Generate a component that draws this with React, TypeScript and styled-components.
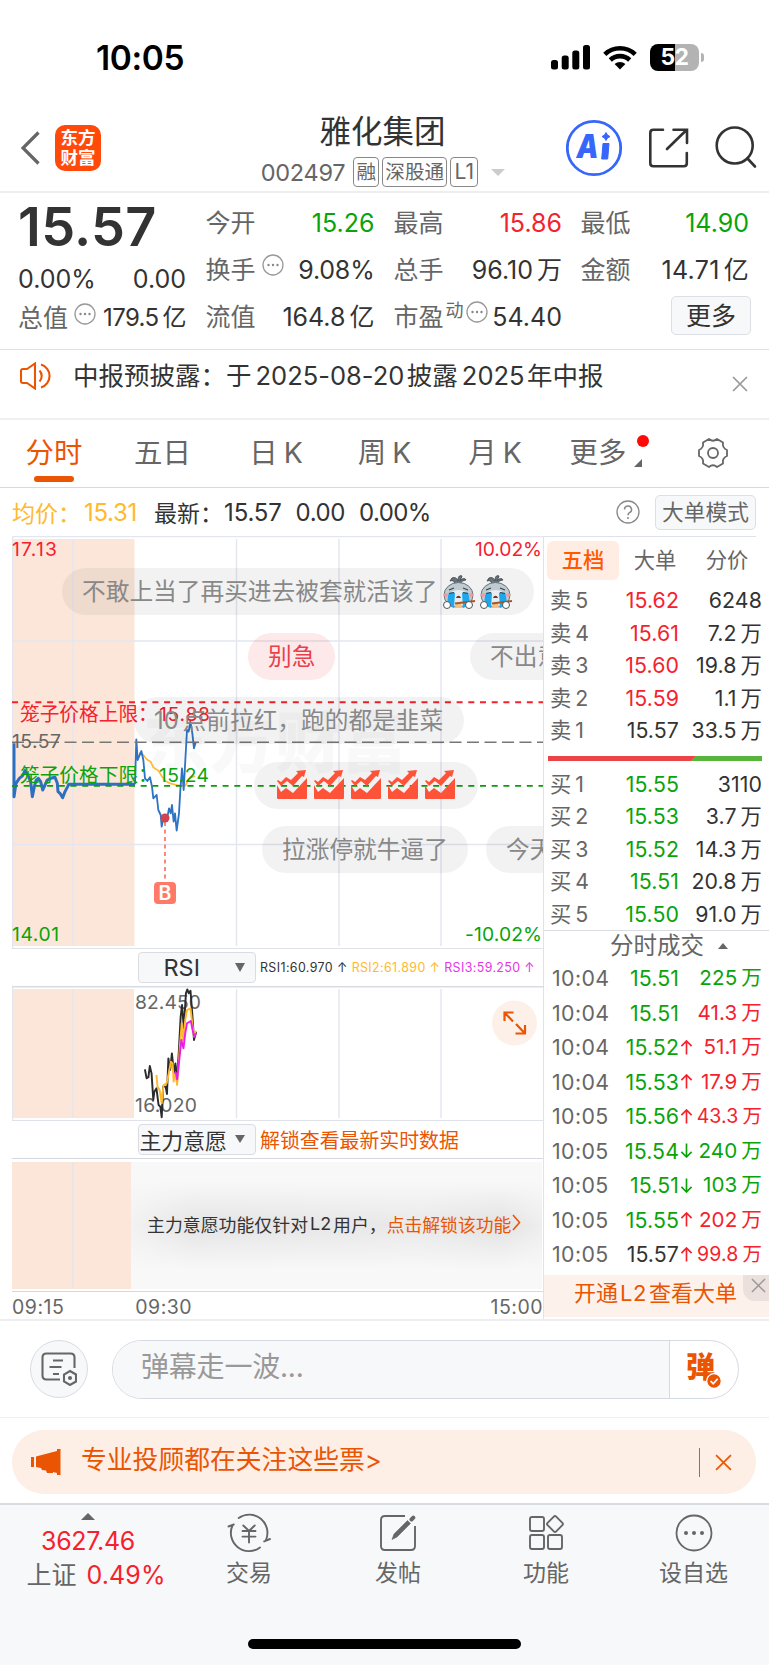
import React from "react";
import styled, { createGlobalStyle } from "styled-components";

const C = {
  text: "#333",
  sub: "#666",
  red: "#f5222d",
  green: "#0aa30a",
  orange: "#ea5504",
  yellow: "#ffb92e",
  line: "#dfe2e8",
  pink: "#fce6da",
  soft: "#f7f8fa",
};

const Global = createGlobalStyle`
  * { box-sizing: border-box; }
  body {
    margin: 0;
    background: #fff;
    color: ${C.text};
    font-family: Inter, "Noto Sans CJK SC", sans-serif;
    font-feature-settings: "calt" 0;
  }
  svg { display: block; flex: none; }
`;

const Page = styled.main`
  width: 769px;
  height: 1665px;
  overflow: hidden;
  display: flex;
  flex-direction: column;
  white-space: nowrap;
`;

type TxtProps = { $size?: number; $color?: string; $ls?: number; $weight?: number; $ml?: number };
const Txt = styled.span<TxtProps>`
  font-size: ${(p) => p.$size ?? 25}px;
  color: ${(p) => p.$color ?? C.text};
  letter-spacing: ${(p) => p.$ls ?? 0}px;
  font-weight: ${(p) => p.$weight ?? 400};
  margin-left: ${(p) => p.$ml ?? 0}px;
`;

/* ---------- status bar ---------- */
const StatusBar = styled.div`
  height: 112px;
  flex: none;
  display: flex;
  align-items: flex-start;
  padding: 38px 65px 0 96px;
`;
const Clock = styled.div`
  flex: 1;
  font-size: 33.5px;
  line-height: 40px;
  font-weight: 600;
  color: #000;
  letter-spacing: -0.4px;
`;
const Battery = styled.div`
  width: 49px;
  height: 27px;
  margin: 6px 0 0 13px;
  border-radius: 8px;
  background: linear-gradient(90deg, #000 52%, #b3b3b3 52%);
  color: #fff;
  font-size: 23px;
  line-height: 27px;
  font-weight: 700;
  letter-spacing: -0.5px;
  text-align: center;
`;
const BatteryNub = styled.div`
  width: 3px;
  height: 9px;
  margin: 15px 0 0 2px;
  border-radius: 0 4px 4px 0;
  background: #b3b3b3;
`;

/* ---------- header ---------- */
const Header = styled.header`
  height: 81px;
  flex: none;
  display: flex;
  border-bottom: 2px solid #eee;
`;
const HeaderSide = styled.div<{ $w: number }>`
  width: ${(p) => p.$w}px;
  height: 72px;
  display: flex;
  align-items: center;
`;
const Brand = styled.div`
  width: 46px;
  height: 46px;
  margin-left: 15px;
  border-radius: 10px;
  background: #ff4a0a;
  color: #fff;
  font-size: 17.5px;
  line-height: 19.5px;
  font-weight: 700;
  text-align: center;
  padding: 3px 5px 0;
  white-space: normal;
`;
const Heading = styled.div`
  flex: 1;
  display: flex;
  flex-direction: column;
  align-items: center;
  padding-right: 4px;
`;
const Title = styled.h1`
  margin: 0;
  font-size: 31.5px;
  line-height: 40px;
  font-weight: 400;
`;
const CodeRow = styled.div`
  display: flex;
  align-items: center;
  height: 30px;
  margin-top: 5px;
  padding-left: 1px;
  color: ${C.sub};
`;
const Badge = styled.span<{ $w: number }>`
  width: ${(p) => p.$w}px;
  height: 30px;
  margin-right: 3px;
  border: 1.5px solid #888;
  border-radius: 4px;
  font-size: 19.6px;
  line-height: 28px;
  text-align: center;
`;
const Caret = styled.i<{ $s: number; $h: number; $c: string; $up?: boolean }>`
  width: 0;
  height: 0;
  flex: none;
  border: ${(p) => p.$s}px solid transparent;
  border-top: ${(p) => (p.$up ? "0" : `${p.$h}px solid ${p.$c}`)};
  border-bottom: ${(p) => (p.$up ? `${p.$h}px solid ${p.$c}` : "0")};
`;

/* ---------- quote ---------- */
const Quote = styled.section`
  height: 157px;
  flex: none;
  display: flex;
  padding: 0 19px 0 18px;
  border-bottom: 1px solid #e2e2e2;
`;
const QuoteCol = styled.div<{ $w: number; $ml?: number; $top?: number }>`
  width: ${(p) => p.$w}px;
  margin-left: ${(p) => p.$ml ?? 0}px;
  padding-top: ${(p) => p.$top ?? 6}px;
  flex: none;
`;
const BigPrice = styled.div`
  font-size: 54px;
  line-height: 60px;
  font-weight: 600;
  letter-spacing: 0.3px;
`;
const Pair = styled.div<{ $h?: number }>`
  display: flex;
  align-items: center;
  justify-content: space-between;
  height: ${(p) => p.$h ?? 47}px;
  font-size: 25px;
  line-height: 32px;
`;
const Label = styled.span`
  color: ${C.sub};
  display: flex;
  align-items: center;
`;
const Unit = styled.span`
  margin-left: 4px;
`;
const Sup = styled.span`
  font-size: 18px;
  margin: -12px 0 0 2px;
`;
const MoreButton = styled.button`
  display: block;
  width: 80px;
  height: 39px;
  margin: 8px -2px 0 auto;
  padding: 0;
  border: 1.5px solid #dcdfe5;
  border-radius: 5px;
  background: ${C.soft};
  color: ${C.text};
  font: inherit;
  font-size: 25px;
  line-height: 34px;
`;

/* ---------- notice ---------- */
const Notice = styled.section`
  height: 70px;
  flex: none;
  display: flex;
  align-items: flex-start;
  padding: 9px 21px 0 20px;
  border-bottom: 2px solid #f0f0f0;
`;
const NoticeText = styled.div`
  flex: 1;
  margin: 0 0 0 20px;
  font-size: 25.5px;
  line-height: 34px;
  b { font-weight: 400; margin: 0 2.5px 0 4px; letter-spacing: 0; }
`;

/* ---------- tabs ---------- */
const Tabs = styled.nav`
  height: 68px;
  flex: none;
  display: flex;
  border-bottom: 1px solid #d5d9e4;
  position: relative;
`;
const Tab = styled.div<{ $w: number; $on?: boolean }>`
  width: ${(p) => p.$w}px;
  display: flex;
  flex-direction: column;
  align-items: center;
  padding-top: 15px;
  font-size: 28.4px;
  line-height: 36px;
  word-spacing: -2px;
  color: ${(p) => (p.$on ? C.orange : C.sub)};
  &::after {
    content: "";
    width: 40px;
    height: 6px;
    margin-top: 5px;
    border-radius: 3px;
    background: ${(p) => (p.$on ? C.orange : "transparent")};
  }
`;
const TabDot = styled.i`
  position: absolute;
  left: 637px;
  top: 15px;
  width: 12px;
  height: 12px;
  border-radius: 6px;
  background: #ff0808;
`;
const TabCorner = styled.i`
  position: absolute;
  left: 634px;
  top: 39px;
  border-left: 8px solid transparent;
  border-bottom: 8px solid ${C.sub};
`;

const InfoRow = styled.div`
  height: 48px;
  flex: none;
  display: flex;
  align-items: center;
  padding: 0 13px 0 12px;
  font-size: 24px;
`;
const Spacer = styled.div`
  flex: 1;
`;
const ModeButton = styled.button`
  width: 101px;
  height: 35px;
  margin-left: 15px;
  padding: 0;
  border: 1.5px solid #dcdfe5;
  border-radius: 5px;
  background: ${C.soft};
  color: ${C.sub};
  font: inherit;
  font-size: 21.7px;
  line-height: 30px;
`;

/* ---------- main area ---------- */
const Main = styled.section`
  height: 785px;
  flex: none;
  display: flex;
  border-bottom: 2px solid #eee;
`;
const ChartCol = styled.div`
  width: 544px;
  padding-left: 12px;
  border-right: 1px solid ${C.line};
`;
const PriceArea = styled.div`
  position: relative;
  height: 412px;
  overflow: hidden;
`;
const Danmu = styled.div<{ $x: number; $y: number; $w: number; $red?: boolean }>`
  position: absolute;
  left: ${(p) => p.$x}px;
  top: ${(p) => p.$y}px;
  width: ${(p) => p.$w}px;
  height: 47px;
  padding-left: 20px;
  border-radius: 24px;
  display: flex;
  align-items: center;
  background: ${(p) => (p.$red ? "rgba(235,40,50,.1)" : "rgba(0,0,0,.05)")};
  color: ${(p) => (p.$red ? "#e8404a" : "#888")};
  font-size: 23.7px;
  line-height: 44px;
`;
const IndicatorBar = styled.div`
  height: 38px;
  display: flex;
  align-items: center;
  padding: 0 0 1px 126px;
  border-top: 1px solid ${C.line};
  font-size: 13.2px;
`;
const Select = styled.div`
  width: 118px;
  height: 31px;
  flex: none;
  display: flex;
  align-items: center;
  justify-content: flex-end;
  padding-right: 10px;
  border: 1.5px solid #d9dce3;
  border-radius: 4px;
  background: ${C.soft};
  font-size: 21.7px;
`;
const Locked = styled.div`
  height: 134px;
  display: flex;
  padding: 3px 0 2px;
  border-top: 1.5px solid #d5d8de;
  border-bottom: 1.5px solid #d5d8de;
`;
const LockedPink = styled.div`
  width: 119px;
  background: linear-gradient(90deg, ${C.pink} 60px, #ebe6e6 60px, #ebe6e6 62px, ${C.pink} 62px);
`;
const LockedMsg = styled.div`
  width: 411px;
  display: flex;
  align-items: center;
  padding: 0 0 4px 16px;
  font-size: 17.9px;
  background:
    linear-gradient(180deg, #f8f8f8 15%, rgba(248,248,248,0) 50%, #f8f8f8 85%),
    linear-gradient(90deg, #f2f2f2 0%, #e4e4e4 15%, #e9e9e9 70%, #e2e2e2 90%, #eee 100%);
`;
const TimeAxis = styled.div`
  display: flex;
  height: 29px;
  align-items: center;
  color: ${C.sub};
  font-size: 19.5px;
  letter-spacing: 0.5px;
`;

/* ---------- order book ---------- */
const BookCol = styled.aside`
  width: 225px;
  display: flex;
  flex-direction: column;
`;
const BookTabs = styled.div`
  height: 48px;
  flex: none;
  width: 212px;
  display: flex;
  align-items: center;
  border-top: 1px solid ${C.line};
  padding-left: 3px;
  font-size: 21.3px;
  line-height: 30px;
  color: ${C.sub};
`;
const BookTab = styled.div<{ $on?: boolean }>`
  width: 72px;
  height: 39px;
  line-height: 38px;
  text-align: center;
  border-radius: 6px;
  flex: none;
  color: ${(p) => (p.$on ? "#ff5a00" : C.sub)};
  font-weight: ${(p) => (p.$on ? 500 : 400)};
  background: ${(p) => (p.$on ? "#ffede4" : "none")};
`;
const Row = styled.div<{ $h: number }>`
  height: ${(p) => p.$h}px;
  flex: none;
  display: grid;
  grid-template-columns: 62px 73px 83px;
  align-items: center;
  font-size: 21.3px;
  line-height: 30px;
  letter-spacing: 0.1px;
  color: ${C.sub};
`;
const RowLabel = styled.span<{ $l: number }>`
  padding-left: ${(p) => p.$l}px;
  letter-spacing: ${(p) => (p.$l === 8 ? 0.4 : 0)}px;
`;
const RowPrice = styled.span<{ $c: string }>`
  text-align: right;
  color: ${(p) => p.$c};
`;
const RowVol = styled.span<{ $c: string; $s?: number }>`
  display: flex;
  justify-content: flex-end;
  align-items: center;
  color: ${(p) => p.$c};
  font-size: ${(p) => p.$s ?? 21.3}px;
  svg { margin-right: auto; margin-left: 1px; }
`;
const Ratio = styled.div`
  width: 214px;
  height: 5px;
  flex: none;
  margin: 9px 0 7px 4px;
  background: linear-gradient(135deg, #ea4446 104px, #58b53c 104.5px);
`;
const TradesHead = styled.div`
  height: 31px;
  flex: none;
  display: flex;
  align-items: center;
  justify-content: center;
  gap: 14px;
  border-top: 1.5px solid #d8dbe2;
  color: ${C.sub};
  font-size: 23.5px;
  line-height: 30px;
  padding-left: 25px;
`;
const Upsell = styled.div`
  position: relative;
  height: 42px;
  flex: none;
  margin-top: 3px;
  padding-right: 2px;
  background: #fdf1eb;
  color: ${C.orange};
  font-size: 22px;
  line-height: 36px;
  text-align: center;
  b { font-weight: 400; margin: 0 2px; letter-spacing: 0.5px; }
`;
const UpsellClose = styled.div`
  position: absolute;
  right: 0;
  top: 0;
  width: 26px;
  height: 26px;
  border-bottom-left-radius: 12px;
  background: #ebe0db;
  display: flex;
  align-items: center;
  justify-content: center;
  padding-left: 4px;
  padding-bottom: 4px;
`;

/* ---------- footer parts ---------- */
const ChatBar = styled.section`
  height: 97px;
  flex: none;
  display: flex;
  align-items: center;
  padding: 0 30px 0 30px;
  border-bottom: 1px solid #eee;
`;
const RoundButton = styled.div`
  width: 58px;
  height: 58px;
  border-radius: 29px;
  border: 1.5px solid #d9dce3;
  background: ${C.soft};
  display: flex;
  align-items: center;
  justify-content: center;
`;
const ChatInput = styled.div`
  width: 627px;
  height: 59px;
  margin-left: 24px;
  border-radius: 30px;
  border: 1.5px solid #d5d9e0;
  display: flex;
  overflow: hidden;
`;
const Placeholder = styled.div`
  width: 557px;
  padding-left: 28px;
  background: ${C.soft};
  border-right: 1.5px solid #d5d9e0;
  color: #999;
  font-size: 28px;
  line-height: 52px;
  letter-spacing: -0.2px;
`;
const Bullet = styled.div`
  position: relative;
  flex: 1;
  padding-left: 16px;
  font-size: 29px;
  font-weight: 900;
  line-height: 53px;
  color: ${C.orange};
  svg { position: absolute; left: 36px; top: 32px; }
`;
const Promo = styled.section`
  height: 64px;
  flex: none;
  margin: 12px 13px 9px 12px;
  padding: 0 24px 0 19px;
  border-radius: 32px;
  background: #fdeee6;
  display: flex;
  align-items: center;
  color: ${C.orange};
`;
const PromoText = styled.div`
  margin: -5px 0 0 20px;
  font-size: 25.8px;
  line-height: 34px;
`;
const Rule = styled.i`
  width: 1.5px;
  height: 29px;
  margin-right: 15px;
  background: ${C.orange};
`;
const BottomBar = styled.footer`
  flex: 1;
  display: flex;
  flex-direction: column;
  align-items: center;
  background: ${C.soft};
  border-top: 2px solid #d8dbe0;
`;
const BottomItems = styled.div`
  width: 769px;
  height: 134px;
  display: flex;
`;
const IndexBox = styled.div`
  width: 176px;
  display: flex;
  flex-direction: column;
  align-items: center;
  padding-top: 8px;
  color: ${C.red};
  font-size: 25px;
  line-height: 34px;
`;
const IndexLine = styled.div<{ $pl?: number; $ls?: number }>`
  padding-left: ${(p) => p.$pl ?? 0}px;
  letter-spacing: ${(p) => p.$ls ?? 0}px;
`;
const BottomItem = styled.div<{ $w: number }>`
  width: ${(p) => p.$w}px;
  display: flex;
  flex-direction: column;
  align-items: center;
  padding-top: 8px;
  color: ${C.sub};
  font-size: 23px;
  line-height: 30px;
  svg { margin-bottom: 5px; }
`;
const HomeBar = styled.div`
  width: 273px;
  height: 10px;
  border-radius: 5px;
  background: #000;
`;

/* ---------- icons ---------- */
const Dots = ({ ml = 4 }: { ml?: number }) => (
  <svg width="22" height="22" viewBox="0 0 22 22" style={{ marginLeft: ml, marginTop: -9 }}>
    <circle cx="11" cy="11" r="10" fill="none" stroke="#999" strokeWidth="1.3" />
    <g fill="#888">
      <circle cx="6.5" cy="11" r="1.2" />
      <circle cx="11" cy="11" r="1.2" />
      <circle cx="15.5" cy="11" r="1.2" />
    </g>
  </svg>
);

const Cross = ({ s, c, w = 1.6 }: { s: number; c: string; w?: number }) => (
  <svg width={s} height={s} viewBox="0 0 16 16">
    <path d="M1 1 15 15M15 1 1 15" stroke={c} strokeWidth={w} fill="none" />
  </svg>
);

const Arrow = ({ up, c, s = 13 }: { up: boolean; c: string; s?: number }) => (
  <svg width={s} height={s * 1.15} viewBox="0 0 14 16" fill="none" stroke={c} strokeWidth="1.8">
    <path d={up ? "M7 15.5V1M1.5 6.5 7 1l5.5 5.5" : "M7 .5V15M1.5 9.5 7 15l5.5-5.5"} />
  </svg>
);

const CryFace = ({ ml }: { ml: number }) => (
  <svg width="34" height="36" viewBox="0 0 34 36" style={{ marginLeft: ml }}>
    <path d="M10 4c3-1 5 0 6 3 0-4 1-6 4-5-1 2-1 3-2 5 2-3 5-3 6-1-3 0-5 2-6 4h-5c-1-3-2-4-5-3z" fill="#66737a" stroke="#465056" strokeWidth="1" />
    <ellipse cx="16.5" cy="21" rx="14.5" ry="12.5" fill="#bfcbd1" stroke="#65727a" strokeWidth="1" />
    <ellipse cx="16.5" cy="24" rx="11" ry="8" fill="#e6ecef" />
    <path d="M7 19c3-1 5-1 6 0l-1 15-5-2c-2-5-2-9 0-13zM26 19c-3-1-5-1-6 0l1 15 5-2c2-5 2-9 0-13z" fill="#1ea7ea" />
    <path d="M7 16l5-2M26 16l-5-2M7 19.5l5-1M26 19.5l-5-1" stroke="#37424a" strokeWidth="1.2" />
    <circle cx="4" cy="21" r="2" fill="#f79aa0" />
    <circle cx="29" cy="21" r="2" fill="#f79aa0" />
    <path d="M14 24c1-3 4-3 5 0z" fill="#6d3a2a" />
    <path d="M13 34c0-7 7-7 7 0z" fill="#f5bf80" />
    <path d="M13 29.500 33 27" stroke="#a5562a" strokeWidth="1.8" />
    <circle cx="5" cy="31" r="3.500" fill="#fff" stroke="#4c565c" />
    <circle cx="27" cy="31" r="3.500" fill="#fff" stroke="#4c565c" />
  </svg>
);

const SurgeIcon = () => (
  <svg width="30" height="29" viewBox="0 0 30 29" fill="#ff5339" style={{ marginRight: 7.1, marginTop: -2 }}>
    <path d="M0 15v13q0 1 1 1h28q1 0 1-1V8L16 23l-7-5-5 4z" />
    <path d="M0 11l4 5 6-5 6 5L25 6l2 1 2-7-10 1 2 2-7 7-5-3-5 5-3-2z" />
  </svg>
);

/* ---------- data ---------- */
const sells: [string, string, string, string, string][] = [
  ["5", "15.62", C.red, "6248", ""],
  ["4", "15.61", C.red, "7.2", "万"],
  ["3", "15.60", C.red, "19.8", "万"],
  ["2", "15.59", C.red, "1.1", "万"],
  ["1", "15.57", C.text, "33.5", "万"],
];
const buys: [string, string, string, string, string][] = [
  ["1", "15.55", C.green, "3110", ""],
  ["2", "15.53", C.green, "3.7", "万"],
  ["3", "15.52", C.green, "14.3", "万"],
  ["4", "15.51", C.green, "20.8", "万"],
  ["5", "15.50", C.green, "91.0", "万"],
];
const trades: [string, string, string, "" | "u" | "d", string, string][] = [
  ["10:04", "15.51", C.green, "", "225", C.green],
  ["10:04", "15.51", C.green, "", "41.3", C.red],
  ["10:04", "15.52", C.green, "u", "51.1", C.red],
  ["10:04", "15.53", C.green, "u", "17.9", C.red],
  ["10:05", "15.56", C.green, "u", "43.3", C.red],
  ["10:05", "15.54", C.green, "d", "240", C.green],
  ["10:05", "15.51", C.green, "d", "103", C.green],
  ["10:05", "15.55", C.green, "u", "202", C.red],
  ["10:05", "15.57", C.text, "u", "99.8", C.red],
];

const auctionLine =
  "42,640 42,800 48,760 58,745 68,737 75,722 85,738 92,755 97,800 103,770 108,752 115,745 122,755 128,780 135,765 142,750 152,745 165,742 172,760 174,785 180,790 188,803 195,785 203,770 206,763 405,763";
const priceLine =
  "405,763 409,628 413,690 424,663 430,690 435,745 442,753 450,742 456,770 460,805 470,795 475,840 482,855 485,890 490,865 495,860 502,862 507,835 512,850 516,825 521,875 525,850 530,902 537,850 541,780 546,715 551,780 556,690 561,600 566,605 571,575 577,610 582,655 587,637";
const avgLine =
  "413,690 420,668 430,675 440,688 452,695 460,712 475,722 485,738 495,752 510,760 530,765 555,768 568,745 585,738";
const rsi1 =
  "413,388 418,415 423,412 427,378 432,400 437,480 440,455 446,445 452,495 457,500 461,532 465,440 472,440 476,462 480,355 485,390 490,340 496,400 500,370 505,415 510,330 515,230 519,195 524,265 530,160 534,148 538,160 543,152 548,220 553,300 559,275";
const rsi2 =
  "446,405 449,440 455,450 461,490 466,435 475,430 481,400 487,365 492,370 495,425 500,400 505,435 512,330 518,250 522,300 528,240 533,210 543,205 548,250 553,290 558,272";
const rsi3 = "498,395 502,400 505,418 511,360 517,300 523,325 528,280 533,250 544,243 549,270 554,290 559,280";

const PriceChart = () => (
  <svg width="532" height="412" viewBox="12 536 532 412" fontSize="19.3">
    <rect x="12" y="539" width="122.500" height="407" fill={C.pink} />
    <g stroke="#e3e6f0" strokeWidth="1.4">
      <path d="M12 536.500H544M12.500 536V948M73 539V946M236.500 539V946M339 539V946M441 539V946M12 641H544M12 844.500H544" />
    </g>
    <text x="143" y="767" fontSize="66" fontWeight="900" fill="#000" fillOpacity=".022">东方财富</text>
    <g transform="translate(0 530) scale(.33333)" fill="none" strokeLinejoin="round">
      <polyline points={avgLine} stroke={C.yellow} strokeWidth="5" />
      <polyline points={auctionLine} stroke="#2f6fc0" strokeWidth="9" />
      <polyline points={priceLine} stroke="#2f74c4" strokeWidth="5.500" />
    </g>
    <path d="M12 702.300H544" stroke={C.red} strokeWidth="2" strokeDasharray="6 5.700" />
    <path d="M12 742.300H544" stroke="#777" strokeWidth="1.400" strokeDasharray="12 5.500" />
    <path d="M12 785.800H544" stroke="#0a9d0a" strokeWidth="1.800" strokeDasharray="6 5.700" />
    <text x="12" y="556" fill={C.red} textLength="45">17.13</text>
    <text x="542" y="556" fill={C.red} textLength="67" textAnchor="end">10.02%</text>
    <text x="12" y="748" fill={C.sub} textLength="49">15.57</text>
    <text x="12" y="941" fill={C.green} textLength="47">14.01</text>
    <text x="542" y="941" fill={C.green} textLength="77" textAnchor="end">-10.02%</text>
    <text x="20" y="721" fill={C.red} fontSize="19.700">笼子价格上限：</text>
    <text x="159" y="721" fill={C.red} textLength="51">15.88</text>
    <text x="20" y="782" fill={C.green} fontSize="19.700">笼子价格下限：</text>
    <text x="159" y="782" fill={C.green} textLength="50">15.24</text>
    <path d="M165 822V882" stroke="#ff7a6a" strokeWidth="1.800" strokeDasharray="4 3.500" />
    <circle cx="165" cy="818" r="4.500" fill="#cf4450" />
    <rect x="154" y="882" width="22" height="22" rx="4" fill="#ff7a68" />
    <text x="165" y="900" fill="#fff" fontSize="19.500" fontWeight="600" textAnchor="middle">B</text>
  </svg>
);

const RsiChart = () => (
  <svg width="532" height="134" viewBox="12 986 532 134" fontSize="19.300">
    <rect x="12" y="989" width="122" height="129" fill={C.pink} />
    <path d="M12.500 986V1120M73 989V1118M236.500 989V1118M339 989V1118M441 989V1118" stroke="#e3e6ef" strokeWidth="1.400" />
    <path d="M12 986.700H544" stroke="#d8dbe2" strokeWidth="1.500" />
    <g fill={C.sub}>
      <text x="135" y="1008.500" textLength="66">82.450</text>
      <text x="135" y="1112" textLength="62">16.020</text>
    </g>
    <g transform="translate(0 940) scale(.3508 .33333)" fill="none" strokeLinejoin="round">
      <polyline points={rsi1} stroke="#2b2b2b" strokeWidth="5.500" />
      <polyline points={rsi2} stroke={C.yellow} strokeWidth="5.500" />
      <polyline points={rsi3} stroke="#e91ee9" strokeWidth="5.500" />
    </g>
    <circle cx="514.500" cy="1023" r="22.500" fill="#fdf0e9" />
    <path d="M504.500 1021v-8.500h9M505 1013l8 8.500M525 1025v8.500h-9.500M524.500 1033l-8.500-9" fill="none" stroke={C.orange} strokeWidth="2.200" />
  </svg>
);

const BookRow = ({ side, r }: { side: string; r: [string, string, string, string, string] }) => (
  <Row $h={32.5}>
    <RowLabel $l={6}>
      {side}
      <Unit>{r[0]}</Unit>
    </RowLabel>
    <RowPrice $c={r[2]}>{r[1]}</RowPrice>
    <RowVol $c={C.text}>
      {r[3]}
      {r[4] && <Unit>{r[4]}</Unit>}
    </RowVol>
  </Row>
);

export default function App() {
  return (
    <Page>
      <Global />
      <StatusBar>
        <Clock>10:05</Clock>
        <svg width="39" height="25" viewBox="0 0 39 25" style={{ marginTop: 7 }}>
          <rect x="0" y="15" width="7" height="9.500" rx="2.500" />
          <rect x="10.700" y="10.500" width="7" height="14" rx="2.500" />
          <rect x="21.300" y="5.500" width="7" height="19" rx="2.500" />
          <rect x="32" y="0" width="7" height="24.500" rx="2.500" />
        </svg>
        <svg width="34" height="25" viewBox="0 0 34 25" style={{ margin: "7px 0 0 13px" }}>
          <g fill="none" stroke="#000" strokeWidth="4.600">
            <path d="M1.800 9.300a22 22 0 0 1 30.400 0" />
            <path d="M7.300 15a14 14 0 0 1 19.400 0" />
          </g>
          <path d="M17 24.500 11.600 19a8 8 0 0 1 10.800 0z" />
        </svg>
        <Battery>52</Battery>
        <BatteryNub />
      </StatusBar>

      <Header>
        <HeaderSide $w={203}>
          <svg width="20" height="34" viewBox="0 0 20 34" style={{ marginLeft: 20 }}>
            <path d="M18.500 1.500 3 17l15.500 15.500" fill="none" stroke="#666" strokeWidth="3.200" />
          </svg>
          <Brand>东方财富</Brand>
        </HeaderSide>
        <Heading>
          <Title>雅化集团</Title>
          <CodeRow>
            <Txt $size={23.5} $color={C.sub} $ls={-0.3}>002497</Txt>
            <Txt $ml={8} />
            <Badge $w={26}>融</Badge>
            <Badge $w={65}>深股通</Badge>
            <Badge $w={28} style={{ fontSize: 21 }}>L1</Badge>
            <Txt $ml={10} />
            <Caret $s={7} $h={7} $c="#ccc" />
          </CodeRow>
        </Heading>
        <HeaderSide $w={203}>
          <svg width="203" height="60" viewBox="566 118 203 60">
            <circle cx="594" cy="148" r="26.700" fill="#fff" stroke="#3766fb" strokeWidth="2.800" />
            <g fill="#3766fb">
              <text x="576.500" y="158" fontSize="32.500" fontWeight="900" fontStyle="italic" textLength="22" lengthAdjust="spacingAndGlyphs">A</text>
              <path d="M603 143.500h6l-1.300 15.500h-6z" stroke="#3766fb" strokeLinejoin="round" />
              <path d="M606 132.500q1 3.200 4 4-3 1-4 4-1-3-4-4 3-.8 4-4z" stroke="#3766fb" />
            </g>
            <g fill="none" stroke="#333" strokeWidth="2.600" strokeLinecap="round">
              <path d="M663 129.800h-9.700q-3 0-3 3v30.500q0 3 3 3h30.500q3 0 3-3V153" />
              <path d="M673.500 129.800h13.500V143M686.500 130 667 149" />
              <circle cx="734.700" cy="145.500" r="18" />
              <path d="M747.500 158.500l7.500 8" />
            </g>
          </svg>
        </HeaderSide>
      </Header>

      <Quote>
        <QuoteCol $w={168} $top={4}>
          <BigPrice>15.57</BigPrice>
          <Pair $h={43}>
            <span>0.00%</span>
            <span>0.00</span>
          </Pair>
          <Pair $h={36}>
            <Label>总值<Dots ml={6} /></Label>
            <Txt $size={24} $ls={-0.6}>179.5<Unit>亿</Unit></Txt>
          </Pair>
        </QuoteCol>
        <QuoteCol $w={169} $ml={19.5}>
          <Pair><Label>今开</Label><Txt $color={C.green}>15.26</Txt></Pair>
          <Pair><Label>换手<Dots ml={6} /></Label><Txt $ls={-0.2}>9.08%</Txt></Pair>
          <Pair><Label>流值</Label><span>164.8<Unit>亿</Unit></span></Pair>
        </QuoteCol>
        <QuoteCol $w={168.5} $ml={19}>
          <Pair><Label>最高</Label><Txt $color={C.red}>15.86</Txt></Pair>
          <Pair><Label>总手</Label><span>96.10<Unit>万</Unit></span></Pair>
          <Pair><Label>市盈<Sup>动</Sup><Dots ml={2} /></Label><span>54.40</span></Pair>
        </QuoteCol>
        <QuoteCol $w={168.5} $ml={18.5}>
          <Pair><Label>最低</Label><Txt $color={C.green}>14.90</Txt></Pair>
          <Pair><Label>金额</Label><Txt $ls={0.3}>14.71<Unit>亿</Unit></Txt></Pair>
          <MoreButton style={{ marginTop: 3 }}>更多</MoreButton>
        </QuoteCol>
      </Quote>

      <Notice>
        <svg width="33" height="28" viewBox="0 0 33 28" fill="none" stroke={C.orange} strokeWidth="2.100" style={{ marginTop: 3 }}>
          <path d="M1 9q0-2 2-2h4l8-5.500v25L7 21H3q-2 0-2-2zM19.500 8.500a8 8 0 0 1 0 11M21 2.500a12 12 0 0 1 0 23" />
        </svg>
        <NoticeText>中报预披露：于<b>2025-08-20</b>披露<b>2025</b>年中报</NoticeText>
        <svg width="16" height="16" viewBox="0 0 16 16" style={{ marginTop: 17 }}>
          <path d="M1 1 15 15M15 1 1 15" stroke="#999" strokeWidth="1.700" />
        </svg>
      </Notice>

      <Tabs>
        <Tab $w={108} $on>分时</Tab>
        <Tab $w={109}>五日</Tab>
        <Tab $w={118}>日 K</Tab>
        <Tab $w={99}>周 K</Tab>
        <Tab $w={122}>月 K</Tab>
        <Tab $w={84}>更多</Tab>
        <TabDot />
        <TabCorner />
        <svg width="34" height="34" viewBox="-17 -17 34 34" fill="none" stroke={C.sub} strokeWidth="1.800" style={{ margin: "16px 0 0 56px" }}>
          <path d="M-4-14q4 3.500 8 0l6 3.500q-1 5.500 4 7.500v6q-5 2-4 7.500L4 14q-4-3.500-8 0l-6-3.500q1-5.500-4-7.500v-6q5-2 4-7.500z" strokeLinejoin="round" />
          <circle r="5" />
        </svg>
      </Tabs>

      <InfoRow>
        <Txt $size={23} $color={C.yellow}>均价：</Txt>
        <Txt $size={24} $color={C.yellow} $ls={-0.3} $ml={3}>15.31</Txt>
        <Txt $size={23} $ml={17}>最新：</Txt>
        <Txt $size={24} $ls={-0.2} $ml={1}>15.57</Txt>
        <Txt $size={24} $ls={-0.4} $ml={14}>0.00</Txt>
        <Txt $size={24} $ls={-0.6} $ml={14}>0.00%</Txt>
        <Spacer />
        <svg width="24" height="24" viewBox="0 0 24 24" fill="none" stroke="#888" strokeWidth="1.300">
          <circle cx="12" cy="12" r="11" />
          <path d="M8.500 9.500a3.500 3.500 0 1 1 5 3.200q-1.500.8-1.500 2.500M12 17v2" strokeWidth="1.500" />
        </svg>
        <ModeButton>大单模式</ModeButton>
      </InfoRow>

      <Main>
        <ChartCol>
          <PriceArea>
            <PriceChart />
            <Danmu $x={50} $y={32} $w={472}>不敢上当了再买进去被套就活该了<CryFace ml={5} /><CryFace ml={3} /></Danmu>
            <Danmu $x={236} $y={97} $w={87} $red>别急</Danmu>
            <Danmu $x={458} $y={97} $w={180}>不出意外</Danmu>
            <Danmu $x={122} $y={161} $w={330}>10<Unit>点前拉红，跑的都是韭菜</Unit></Danmu>
            <Danmu $x={242} $y={226} $w={224} style={{ paddingLeft: 23 }}>
              <SurgeIcon /><SurgeIcon /><SurgeIcon /><SurgeIcon /><SurgeIcon />
            </Danmu>
            <Danmu $x={250} $y={290} $w={206}>拉涨停就牛逼了</Danmu>
            <Danmu $x={474} $y={290} $w={180}>今天</Danmu>
          </PriceArea>
          <IndicatorBar>
            <Select>
              <Txt $size={23.5}>RSI</Txt>
              <Txt $ml={35} />
              <Caret $s={5} $h={9} $c={C.sub} />
            </Select>
            <Txt $size={12.4} $ml={4} $ls={0.4}>RSI1:60.970 ↑</Txt>
            <Txt $size={12.4} $ml={4} $ls={0.4} $color={C.yellow}>RSI2:61.890 ↑</Txt>
            <Txt $size={12.4} $ml={4} $ls={0.4} $color="#e933e9">RSI3:59.250 ↑</Txt>
          </IndicatorBar>
          <RsiChart />
          <IndicatorBar>
            <Select>
              <Txt $size={21.9}>主力意愿</Txt>
              <Txt $ml={8} />
              <Caret $s={5} $h={8} $c={C.sub} />
            </Select>
            <Txt $size={19.9} $ml={4} $color={C.orange}>解锁查看最新实时数据</Txt>
          </IndicatorBar>
          <Locked>
            <LockedPink />
            <LockedMsg>
              主力意愿功能仅针对
              <Txt $size={17.9} $ml={2}>L2</Txt>
              <Txt $size={17.9} $ml={2}>用户，</Txt>
              <Txt $size={17.8} $color={C.orange}>点击解锁该功能</Txt>
              <svg width="9" height="17" viewBox="0 0 9 17" style={{ marginLeft: 1, marginTop: -2 }}>
                <path d="M1 1l6.500 7.500L1 16" fill="none" stroke={C.orange} strokeWidth="1.600" />
              </svg>
            </LockedMsg>
          </Locked>
          <TimeAxis>
            <span>09:15</span>
            <Txt $size={19.5} $color={C.sub} $ls={0.5} $ml={71}>09:30</Txt>
            <Spacer />
            <Txt $size={19.5} $color={C.sub} $ls={0.5}>15:00</Txt>
          </TimeAxis>
        </ChartCol>

        <BookCol>
          <BookTabs>
            <BookTab $on>五档</BookTab>
            <BookTab>大单</BookTab>
            <BookTab>分价</BookTab>
          </BookTabs>
          {sells.map((r) => <BookRow key={r[0]} side="卖" r={r} />)}
          <Ratio />
          {buys.map((r) => <BookRow key={r[0]} side="买" r={r} />)}
          <TradesHead>
            <span>分时成交</span>
            <Caret $s={5} $h={6} $c={C.sub} $up />
          </TradesHead>
          {trades.map((t, i) => (
            <Row key={i} $h={34.5}>
              <RowLabel $l={8}>{t[0]}</RowLabel>
              <RowPrice $c={t[2]}>{t[1]}</RowPrice>
              <RowVol $c={t[5]} $s={t[4] === "43.3" || t[4] === "99.8" ? 19.5 : 20.6}>
                {t[3] && <Arrow up={t[3] === "u"} c={t[3] === "u" ? C.red : C.green} />}
                {t[4]}
                <Unit>万</Unit>
              </RowVol>
            </Row>
          ))}
          <Upsell>
            开通<b>L2</b>查看大单
            <UpsellClose><Cross s={15} c="#999" /></UpsellClose>
          </Upsell>
        </BookCol>
      </Main>

      <ChatBar>
        <RoundButton>
          <svg width="36" height="34" viewBox="0 0 36 34" fill="none" stroke={C.sub} strokeWidth="2.100">
            <path d="M19 27.500H5.500Q1.500 27.500 1.500 23.500V5.500q0-4 4-4h24q4 0 4 4V16" />
            <path d="M12 8.500h10M8.500 15h12M12 22h6" />
            <path d="M29 19l6 3.500v7L29 33l-6-3.500v-7z" />
            <circle cx="29" cy="26" r="1" fill={C.sub} />
          </svg>
        </RoundButton>
        <ChatInput>
          <Placeholder>弹幕走一波...</Placeholder>
          <Bullet>
            弹
            <svg width="16" height="16" viewBox="0 0 16 16">
              <circle cx="8" cy="8" r="7.300" fill={C.orange} stroke="#fff" strokeWidth="1.200" />
              <path d="M4.500 8l2.700 2.700 4.500-5" fill="none" stroke="#fff" strokeWidth="1.700" />
            </svg>
          </Bullet>
        </ChatInput>
      </ChatBar>

      <Promo>
        <svg width="30" height="26" viewBox="0 0 30 26" fill={C.orange}>
          <path d="M0 8h3v10H0zM5 7.500 26 2V0h3.500v26H26v-2l-4-1v1h-6l-1-2.500-4-.5-1-2-5-1z" />
        </svg>
        <PromoText>专业投顾都在关注这些票&gt;</PromoText>
        <Spacer />
        <Rule />
        <Cross s={17} c={C.orange} />
      </Promo>

      <BottomBar>
        <BottomItems>
          <IndexBox>
            <Caret $s={7} $h={7} $c={C.sub} $up />
            <IndexLine style={{ marginTop: 4 }} $ls={-0.3}>3627.46</IndexLine>
            <IndexLine $pl={16}>
              <Txt $color={C.sub}>上证</Txt>
              <Txt $color={C.red} $ml={10} $ls={0.1}>0.49%</Txt>
            </IndexLine>
          </IndexBox>
          <BottomItem $w={146}>
            <svg width="44" height="40" viewBox="-22 -20 44 40" fill="none" stroke={C.sub} strokeWidth="1.900" strokeLinecap="round">
              <path d="M-10.300-15A18.200 18.200 0 0 1 16.800 7.400M21 6l-5.800 2.400M11 14.500A18.200 18.200 0 0 1-16.300-8M-20.500-6.500l5.300-2" />
              <path d="M-5.700-7.500 0-2 5.700-7.500M0-2V9.500M-6.500-2H6.500M-6.500 3.600H6.500" />
            </svg>
            交易
          </BottomItem>
          <BottomItem $w={152}>
            <svg width="36" height="40" viewBox="0 0 36 40" fill="none" stroke={C.sub} strokeWidth="1.900">
              <path d="M25 3H5Q1 3 1 7v26q0 4 4 4h26q4 0 4-4V13" />
              <path d="M12 26.500l2-5.500L27.500 7.500l3 3L17 24z" fill={C.sub} strokeWidth=".6" strokeLinejoin="round" />
              <path d="M31.500 6.500 33.300 4.700" strokeWidth="4" strokeLinecap="round" />
            </svg>
            发帖
          </BottomItem>
          <BottomItem $w={144}>
            <svg width="36" height="40" viewBox="0 0 36 40" fill="none" stroke={C.sub} strokeWidth="1.900">
              <rect x="2" y="4" width="14" height="14" rx="2" />
              <rect x="2" y="22" width="14" height="14" rx="2" />
              <rect x="20" y="22" width="14" height="14" rx="2" />
              <path d="M25.800 3.600q1.200-1.200 2.400 0l6.200 6.200q1.200 1.200 0 2.400l-6.200 6.200q-1.200 1.200-2.400 0l-6.200-6.200q-1.200-1.200 0-2.400z" />
            </svg>
            功能
          </BottomItem>
          <BottomItem $w={151}>
            <svg width="40" height="40" viewBox="-20 -20 40 40">
              <circle r="17.500" fill="none" stroke={C.sub} strokeWidth="1.800" />
              <g fill={C.sub}>
                <circle cx="-8" r="2" />
                <circle r="2" />
                <circle cx="8" r="2" />
              </g>
            </svg>
            设自选
          </BottomItem>
        </BottomItems>
        <HomeBar />
      </BottomBar>
    </Page>
  );
}
